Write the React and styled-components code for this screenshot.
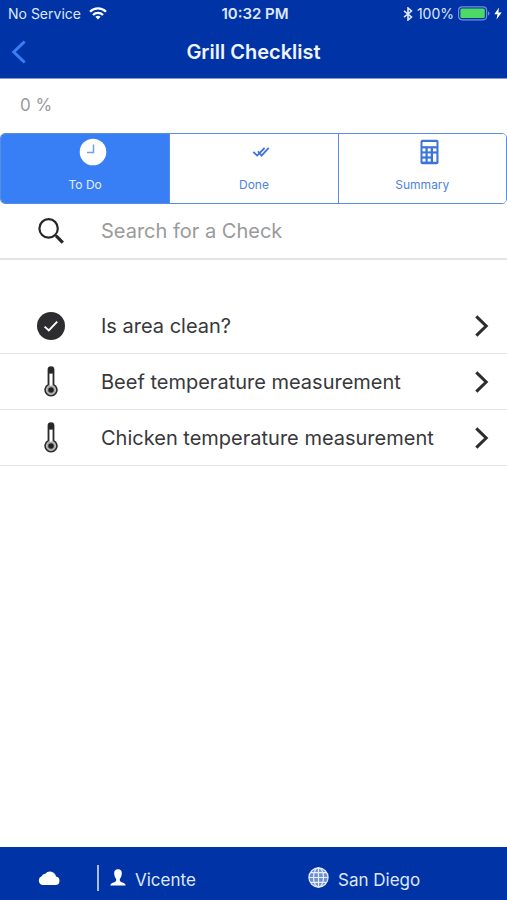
import React, { useState } from "react";
import styled, { createGlobalStyle } from "styled-components";

const colors = {
  navy: "#0033a5",
  blue: "#387ef5",
  line: "#e4e4e4",
  ink: "#38383a",
  muted: "#9a9a9a",
};

const GlobalStyle = createGlobalStyle`
  *, *::before, *::after { box-sizing: border-box; }
  body {
    margin: 0;
    background: #fff;
    color: ${colors.ink};
    font-family: Inter, "Liberation Sans", sans-serif;
  }
  button, input { font: inherit; }
  svg { display: block; flex: none; }
`;

const Screen = styled.div`
  display: flex;
  flex-direction: column;
  min-height: 100vh;
`;

const TopBar = styled.header`
  background: ${colors.navy};
  color: #f0f4fe;
  border-bottom: 1px solid #7f99d2;
`;

const StatusBar = styled.div`
  display: grid;
  grid-template-columns: 1fr auto 1fr;
  align-items: center;
  height: 27px;
  padding: 0 5px 0 8px;
  font-size: 14px;
  color: #dfe7fb;
`;

const StatusGroup = styled.div`
  display: flex;
  align-items: center;
  gap: ${(p) => p.$gap}px;
  justify-content: ${(p) => (p.$end ? "flex-end" : "flex-start")};
`;

const Clock = styled.time`
  font-size: 15px;
  font-weight: 600;
`;

const TitleBar = styled.div`
  display: grid;
  grid-template-columns: 1fr auto 1fr;
  align-items: center;
  height: 51px;
  padding: 0 10px 2px;
`;

const BackButton = styled.button`
  justify-self: start;
  padding: 0;
  border: 0;
  background: none;
  color: ${colors.blue};
`;

const Title = styled.h1`
  margin: 0;
  font-size: 20px;
  font-weight: 600;
  line-height: 24px;
`;

const Progress = styled.p`
  margin: 0;
  padding: 16px 20px 18px;
  font-size: 17px;
  line-height: 20px;
  color: ${colors.muted};
`;

const Segments = styled.div`
  display: grid;
  grid-template-columns: repeat(3, 1fr);
  border: 1px solid #5a8ce0;
  border-radius: 5px;
  overflow: hidden;
`;

const Segment = styled.button`
  display: flex;
  flex-direction: column;
  align-items: center;
  height: 69px;
  padding: 4px 0 0;
  border: 0;
  border-left: 1px solid #5a8ce0;
  background: ${(p) => (p.$active ? colors.blue : "#fff")};
  color: ${(p) => (p.$active ? "#e4eefe" : "#4f83dc")};
  font-size: 12px;

  &:first-child { border-left: 0; }
`;

const SegmentIcon = styled.span`
  display: flex;
  align-items: center;
  height: 28px;
  padding-left: 15px;
`;

const SegmentLabel = styled.span`
  margin-top: 11px;
  line-height: 16px;
`;

const rowLayout = `
  display: grid;
  grid-template-columns: 101px 1fr auto;
  align-items: center;
  width: 100%;
  height: 56px;
  border: 0;
  border-bottom: 1px solid ${colors.line};
  background: #fff;
`;

const SearchRow = styled.label`
  ${rowLayout}
  border-bottom-width: 2px;
`;

const SearchInput = styled.input`
  width: 100%;
  padding: 0;
  border: 0;
  outline: 0;
  background: none;
  color: ${colors.ink};
  font-size: 20px;

  &::placeholder { color: ${colors.muted}; opacity: 1; }
`;

const CheckList = styled.ul`
  flex: 1;
  margin: 0;
  padding: 38px 0 0;
  list-style: none;
`;

const CheckButton = styled.button`
  ${rowLayout}
  padding: 0 18px 0 0;
  color: ${colors.ink};
  font-size: 20px;
  text-align: left;
`;

const LeadIcon = styled.span`
  display: flex;
  justify-content: center;
`;

const Footer = styled.footer`
  display: grid;
  grid-template-columns: 97px 1fr 1fr;
  align-items: center;
  height: 53px;
  padding-top: 8px;
  background: ${colors.navy};
  color: #dfe7fb;
  font-size: 17px;
`;

const FooterItem = styled.div`
  display: flex;
  align-items: center;
  gap: 9px;
  height: 26px;
  padding-left: ${(p) => (p.$divided ? 11 : 6)}px;
  border-left: ${(p) => (p.$divided ? "2px solid #a9bbe6" : "0")};
`;

const FooterText = styled.span`
  padding-top: 4px;
`;

const WifiIcon = () => (
  <svg width="18" height="13" viewBox="0 0 18 13" fill="none" stroke="#fff" strokeWidth="2.3">
    <path d="M1 4.7C5.6.2 12.4.2 17 4.7" />
    <path d="M4 8C6.8 5.2 11.2 5.2 14 8" />
    <path d="M6.4 9.8C8 8.5 10 8.5 11.6 9.8L9 12.6Z" fill="#fff" stroke="none" />
  </svg>
);

const BluetoothIcon = () => (
  <svg width="10" height="14" viewBox="0 0 10 14" fill="none" stroke="currentColor" strokeWidth="1.6">
    <path d="M1 3.8L8.5 10L5 13V1L8.5 4L1 10.2" />
  </svg>
);

const BatteryIcon = () => (
  <svg width="32" height="15" viewBox="0 0 32 15">
    <rect x=".6" y=".8" width="28" height="13" rx="3.5" fill="none" stroke="#7191d3" strokeWidth="1.2" />
    <rect x="2.4" y="2.6" width="24.4" height="9.4" rx="1.5" fill="#4cd964" />
    <path d="M30 5.2C32 6 32 8.8 30 9.6Z" fill="#7191d3" />
  </svg>
);

const BoltIcon = () => (
  <svg width="8" height="13" viewBox="0 0 8 13" fill="#fff">
    <path d="M5 .5L.3 7.3H3.5L2.5 12.5L7.7 5.4H4.4Z" />
  </svg>
);

const BackIcon = () => (
  <svg width="17" height="24" viewBox="0 0 17 24" fill="none" stroke="currentColor" strokeWidth="3">
    <path d="M14.6 1.5L3.8 12L14.6 22.5" />
  </svg>
);

const ClockIcon = () => (
  <svg width="28" height="28" viewBox="0 0 28 28">
    <circle cx="14" cy="14" r="13.3" fill="#fff" />
    <path d="M14.5 6.5V14.5H8" fill="none" stroke="#6f9fed" strokeWidth="1.5" />
  </svg>
);

const DoubleCheckIcon = () => (
  <svg width="18" height="12" viewBox="0 0 18 12" fill="none" stroke="#3f76d6" strokeWidth="1.8">
    <path d="M1.3 5.8L5.2 9.6L12.6 2" />
    <path d="M6 5.4L9.6 9.6L16.7 1.8" />
  </svg>
);

const CalculatorIcon = () => (
  <svg width="19" height="26" viewBox="0 0 19 26">
    <rect x=".5" y=".8" width="18" height="24.4" rx="2" fill="#3a74d8" />
    <g fill="#fff">
      <rect x="2.5" y="3" width="14" height="4.2" />
      <rect x="2.5" y="9.4" width="3" height="3" />
      <rect x="7.7" y="9.4" width="3" height="3" />
      <rect x="13" y="9.4" width="3.4" height="3" />
      <rect x="2.5" y="14.4" width="3" height="3" />
      <rect x="7.7" y="14.4" width="3" height="3" />
      <rect x="13" y="14.6" width="3.4" height="8.2" />
      <rect x="2.5" y="19.6" width="3" height="3" />
      <rect x="7.7" y="19.6" width="3" height="3" />
    </g>
  </svg>
);

const SearchIcon = () => (
  <svg width="26" height="26" viewBox="0 0 26 26" fill="none" stroke="#262626">
    <circle cx="10.6" cy="10.4" r="9.2" strokeWidth="2.2" />
    <path d="M17 17L19 18.6" strokeWidth="2" />
    <path d="M18.4 18.2L24.8 24.6" strokeWidth="3.2" />
  </svg>
);

const CheckCircleIcon = () => (
  <svg width="28" height="28" viewBox="0 0 28 28">
    <circle cx="14" cy="14" r="14" fill="#2d2d30" />
    <path d="M7.6 14.6L11.8 18.5L20.2 9.6" fill="none" stroke="#fff" strokeWidth="1.9" />
  </svg>
);

const ThermometerIcon = () => (
  <svg width="14" height="31" viewBox="0 0 14 31">
    <path
      d="M4.4 18.6V3.6A2.6 2.6 0 0 1 9.6 3.6V18.6A5.9 5.9 0 1 1 4.4 18.6Z"
      fill="#c4c4c4"
      stroke="#2b2b2b"
      strokeWidth="1.6"
    />
    <path d="M4.6 7.6V3.6A2.4 2.4 0 0 1 9.4 3.6V7.6Z" fill="#262626" />
    <path d="M7 8V21" stroke="#fff" strokeWidth="2" />
    <circle cx="7" cy="24" r="4.4" fill="#aaa" />
    <circle cx="7" cy="24" r="2.8" fill="#222" />
  </svg>
);

const ChevronIcon = () => (
  <svg width="15" height="22" viewBox="0 0 15 22" fill="none" stroke="#2c2c2c" strokeWidth="3">
    <path d="M2.3 1.4L12.2 11L2.3 20.6" />
  </svg>
);

const CloudIcon = () => (
  <svg width="22" height="14" viewBox="0 0 22 14" fill="#fff">
    <path d="M5 14A4.6 4.6 0 0 1 3.6 5.2A3.8 3.8 0 0 1 7.3 2.7A6.2 6.2 0 0 1 18 5.5A4.3 4.3 0 0 1 17.6 14Z" />
  </svg>
);

const PersonIcon = () => (
  <svg width="16" height="17" viewBox="0 0 16 17" fill="#fff">
    <path d="M8 .3C5.2.3 4 2 4.2 4.6C4.3 7.2 5.2 9 6.2 10C6.4 12 5.8 12.6 4.4 13.2C2 14 .5 14.4.3 16.5H15.7C15.5 14.4 14 14 11.6 13.2C10.2 12.6 9.6 12 9.8 10C10.8 9 11.7 7.2 11.8 4.6C12 2 10.8.3 8 .3Z" />
  </svg>
);

const GlobeIcon = () => (
  <svg width="21" height="21" viewBox="0 0 21 21" fill="#6f8fd3" stroke="#e6edfb" strokeWidth="1.2">
    <circle cx="10.5" cy="10.5" r="9.6" />
    <ellipse cx="10.5" cy="10.5" rx="5" ry="9.6" fill="none" />
    <path d="M10.5 1V20M1 10.5H20M2.8 5.6H18.2M2.8 15.4H18.2" />
  </svg>
);

const segments = [
  { name: "To Do", Icon: ClockIcon },
  { name: "Done", Icon: DoubleCheckIcon },
  { name: "Summary", Icon: CalculatorIcon },
];

const checks = [
  { name: "Is area clean?", Icon: CheckCircleIcon },
  { name: "Beef temperature measurement", Icon: ThermometerIcon },
  { name: "Chicken temperature measurement", Icon: ThermometerIcon },
];

export default function App() {
  const [active, setActive] = useState("To Do");
  const [query, setQuery] = useState("");
  const visible = checks.filter((c) => c.name.toLowerCase().includes(query.toLowerCase()));

  return (
    <Screen>
      <GlobalStyle />
      <TopBar>
        <StatusBar>
          <StatusGroup $gap={8}>
            No Service
            <WifiIcon />
          </StatusGroup>
          <Clock>10:32 PM</Clock>
          <StatusGroup $gap={4} $end>
            <BluetoothIcon />
            100%
            <BatteryIcon />
            <BoltIcon />
          </StatusGroup>
        </StatusBar>
        <TitleBar>
          <BackButton aria-label="Back">
            <BackIcon />
          </BackButton>
          <Title>Grill Checklist</Title>
        </TitleBar>
      </TopBar>

      <Progress>0 %</Progress>

      <Segments>
        {segments.map(({ name, Icon }) => (
          <Segment
            key={name}
            $active={name === active}
            aria-pressed={name === active}
            onClick={() => setActive(name)}
          >
            <SegmentIcon>
              <Icon />
            </SegmentIcon>
            <SegmentLabel>{name}</SegmentLabel>
          </Segment>
        ))}
      </Segments>

      <SearchRow>
        <LeadIcon>
          <SearchIcon />
        </LeadIcon>
        <SearchInput
          aria-label="Search for a Check"
          placeholder="Search for a Check"
          value={query}
          onChange={(e) => setQuery(e.target.value)}
        />
      </SearchRow>

      <CheckList>
        {visible.map(({ name, Icon }) => (
          <li key={name}>
            <CheckButton>
              <LeadIcon>
                <Icon />
              </LeadIcon>
              {name}
              <ChevronIcon />
            </CheckButton>
          </li>
        ))}
      </CheckList>

      <Footer>
        <LeadIcon>
          <CloudIcon />
        </LeadIcon>
        <FooterItem $divided>
          <PersonIcon />
          <FooterText>Vicente</FooterText>
        </FooterItem>
        <FooterItem>
          <GlobeIcon />
          <FooterText>San Diego</FooterText>
        </FooterItem>
      </Footer>
    </Screen>
  );
}
